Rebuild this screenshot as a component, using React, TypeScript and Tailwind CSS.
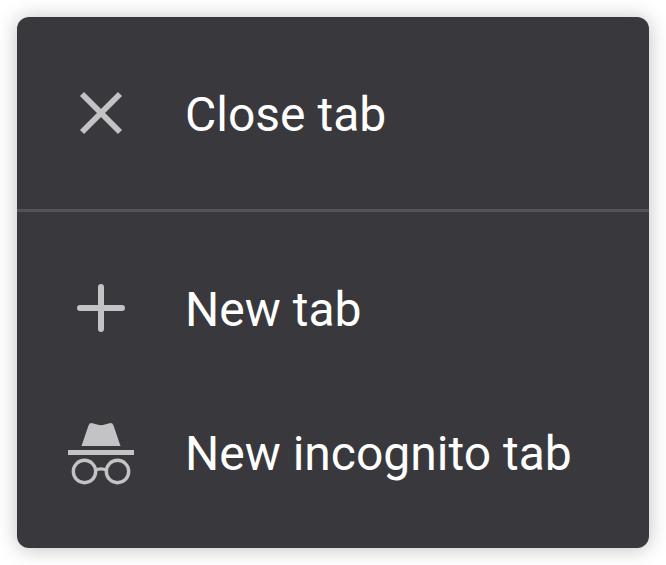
import React from "react";

const itemClass = "flex w-full items-center gap-[50px] pl-[50px] text-left text-[48px] leading-[56px] text-white";

function CloseIcon() {
  return (
    <svg className="h-[68px] w-[68px] shrink-0" viewBox="0 0 68 68" fill="none" stroke="#c3c3c6" strokeWidth="5.8" aria-hidden="true">
      <path d="M15 15 53 53M53 15 15 53" />
    </svg>
  );
}

function PlusIcon() {
  return (
    <svg className="h-[68px] w-[68px] shrink-0" viewBox="0 0 68 68" fill="none" stroke="#c3c3c6" strokeWidth="6" strokeLinecap="round" aria-hidden="true">
      <path d="M34 13V55M13 34H55" />
    </svg>
  );
}

function IncognitoIcon() {
  return (
    <svg className="h-[68px] w-[68px] shrink-0" viewBox="0 0 68 68" fill="#c3c3c6" aria-hidden="true">
      <path d="M14.500 28 21.500 7.500Q22.500 4.500 25.500 5.200L31 6.800Q34 7.600 37 6.800L42.500 5.200Q45.500 4.500 46.500 7.500L53.500 28Z" />
      <path d="M1 32H67V37H1Z" />
      <g fill="none" stroke="#c3c3c6" strokeWidth="3.400">
        <circle cx="17.500" cy="53.500" r="11.200" />
        <circle cx="50.500" cy="53.500" r="11.200" />
        <path d="M28 52.300Q34 49.500 40 52.300" />
      </g>
    </svg>
  );
}

export default function App() {
  return (
    <main className="p-[17px] font-[Roboto,sans-serif]">
      <div role="menu" className="overflow-hidden rounded-xl bg-[#39383d] shadow-[0_1px_20px_rgba(0,0,0,0.25)]">
        <div className="border-b-[3px] border-[#545458]">
          <button type="button" role="menuitem" className={`${itemClass} h-[192px]`}>
            <CloseIcon />
            <span className="pt-1">Close tab</span>
          </button>
        </div>
        <div className="py-6">
          <button type="button" role="menuitem" className={`${itemClass} h-[144px]`}>
            <PlusIcon />
            <span className="pt-1">New tab</span>
          </button>
          <button type="button" role="menuitem" className={`${itemClass} h-[144px]`}>
            <IncognitoIcon />
            <span className="pt-1">New incognito tab</span>
          </button>
        </div>
      </div>
    </main>
  );
}
